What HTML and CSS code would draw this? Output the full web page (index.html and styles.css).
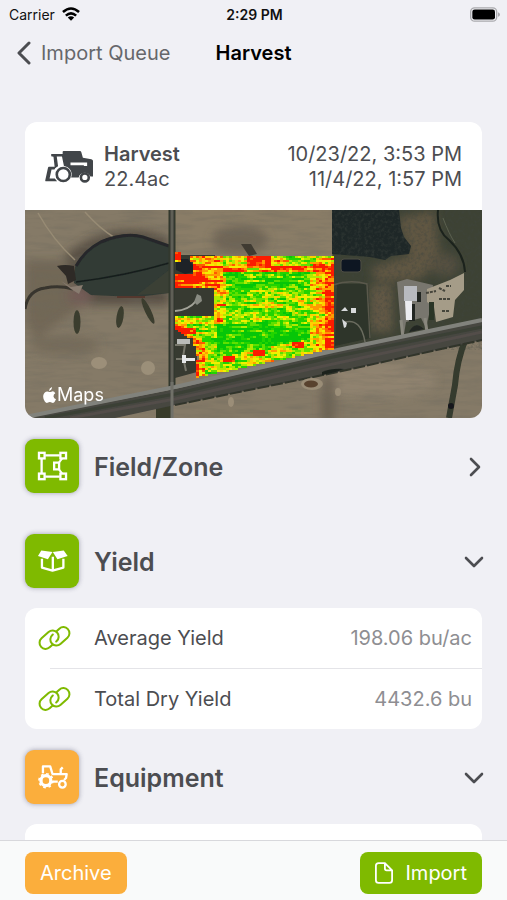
FILE: index.html
```html
<!DOCTYPE html>
<html lang="en">
	<head>
		<meta charset="UTF-8">
		<meta name="viewport" content="width=device-width, initial-scale=1">
		<title>Harvest</title>
		<link rel="stylesheet" href="styles.css">
	</head>
	<body>
		<div class="app">
			<div class="status">
				<div class="carrier">
					<span>Carrier</span>
					<svg class="wifi" viewBox="0 0 56 42"><g fill="none" stroke="#000" stroke-width="8"><path d="M3 15 Q28 -7 53 15"/><path d="M12 26 Q28 12 44 26"/></g><path d="M18 32 Q28 24 38 32 L28 42 Z"/></svg>
				</div>
				<div class="time">2:29 PM</div>
				<svg class="battery" viewBox="0 0 90 44"><rect x="2" y="2" width="78" height="40" rx="12" fill="#f0f0f5" stroke="#a9a9ad" stroke-width="4"/><rect x="7" y="7" width="68" height="30" rx="7"/><path d="M84 15 q6 2 6 7 t-6 7z" fill="#a9a9ad"/></svg>
			</div>

			<nav class="nav">
				<a class="back" href="#">
					<svg viewBox="0 0 14 24"><path d="M12 2 L2 12 L12 22"/></svg>
					<span>Import Queue</span>
				</a>
				<h1>Harvest</h1>
			</nav>

			<main class="content">
				<section class="card">
					<div class="summary">
						<svg class="combine" viewBox="74 102 150 100">
							<g fill="#414549">
								<path d="M93 112 H128 V106 Q128 103 131 103 H181 Q184 103 185 106 L190 124 L216 128 Q221 129 221 134 V181 H213 A19 19 0 0 0 177 184 H154 A26 26 0 0 0 132 149 L126 120 H110 L114 150 L104 156 L100 121 L93 119 Z"/>
								<path fill-rule="evenodd" d="M86 151 H108 L103 160 H94 L88 187 H104 L111 196 H76 Q74 196 75 192 L83 155 Q84 151 86 151 Z"/>
							</g>
							<path d="M152 138 H203 V149 H193 V147 H152 Z" fill="#fff"/>
							<circle cx="130" cy="175" r="20" fill="#fff" stroke="#414549" stroke-width="8"/>
							<circle cx="196" cy="184" r="12" fill="#fff" stroke="#414549" stroke-width="8"/>
						</svg>
						<div class="what"><strong>Harvest</strong><br>22.4ac</div>
						<div class="when">10/23/22, 3:53 PM<br>11/4/22, 1:57 PM</div>
					</div>
					<div class="map">
						<svg class="aerial" viewBox="0 0 457 208" preserveAspectRatio="xMidYMid slice">
							<defs>
								<filter id="soil" x="0" y="0" width="100%" height="100%">
									<feTurbulence type="fractalNoise" baseFrequency="0.03 0.2" numOctaves="4" seed="4"/>
									<feColorMatrix values="0 0 0 0 0.15  0 0 0 0 0.14  0 0 0 0 0.11  0.8 0 0 0 -0.34"/>
								</filter>
								<filter id="leaf" x="0" y="0" width="100%" height="100%">
									<feTurbulence type="fractalNoise" baseFrequency="0.3" numOctaves="3" seed="9"/>
									<feColorMatrix values="0 0 0 0 0.05  0 0 0 0 0.06  0 0 0 0 0.05  1.4 0 0 0 -0.6"/>
								</filter>
								<filter id="soft"><feGaussianBlur stdDeviation="5"/></filter>
								<filter id="edge"><feGaussianBlur stdDeviation="0.7"/></filter>
							</defs>

							<!-- soil -->
							<rect width="457" height="208" fill="#857a67"/>
							<rect x="150" width="158" height="46" fill="#8a7d67"/>
							<g filter="url(#soft)">
								<path d="M0 50 L45 50 L60 95 L10 130 L0 110 Z" fill="#655c4d" opacity=".6"/>
								<path d="M40 45 Q90 5 144 28 V95 H60 Z" fill="#4d463c" opacity=".8"/>
								<ellipse cx="55" cy="86" rx="12" ry="9" fill="#735c57"/>
								<ellipse cx="40" cy="135" rx="35" ry="10" fill="#6c6252" opacity=".6"/>
								<ellipse cx="215" cy="30" rx="28" ry="14" fill="#655d50" opacity=".7"/>
								<ellipse cx="350" cy="170" rx="60" ry="18" fill="#928672" opacity=".8"/>
								<rect x="296" y="165" width="14" height="50" fill="#625a4c" opacity=".7"/>
							</g>
							<rect width="457" height="208" filter="url(#soil)"/>

							<!-- slough and ditches -->
							<g filter="url(#edge)">
								<path d="M13 3 Q28 30 50 50 M60 2 Q74 18 90 28" stroke="#978b74" stroke-width="1.5" fill="none"/>
								<path d="M49 73 L50 57 Q58 40 75 31 Q100 20 118 26 L144 36 V83 L112 87 L66 85 Z" fill="#303a34"/>
								<path d="M112 85 L144 60 V83 Z" fill="#3b4036"/>
								<path d="M51 56 Q60 40 76 32 Q100 22 118 27 L144 36" fill="none" stroke="#25282a" stroke-width="3"/>
								<path d="M51 72 Q100 66 144 53" fill="none" stroke="#171f1d" stroke-width="1.5"/>
								<path d="M32 56 Q40 54 49 56 L51 70 L43 74 L41 66 Z" fill="#2d2a26"/>
								<path d="M0 99 Q3 80 20 78 Q34 75 48 79" fill="none" stroke="#38342d" stroke-width="3"/>
								<path d="M36 71 l10 6 l12 -2 l-4 9 l-8 -5z" fill="#887b70"/>
								<path d="M92 87 H120" stroke="#54382f" stroke-width="2"/>
								<g fill="#3a3c2e">
									<ellipse cx="52" cy="112" rx="3.5" ry="12"/>
									<ellipse cx="95" cy="107" rx="3.5" ry="11" transform="rotate(9 95 107)"/>
									<ellipse cx="123" cy="101" rx="3" ry="14" transform="rotate(-25 123 101)"/>
								</g>
								<ellipse cx="74" cy="153" rx="8" ry="6" fill="#9c8f79"/>
								<ellipse cx="123" cy="158" rx="7" ry="7" fill="#9b8f79"/>
								<path d="M216 34 l10 0 l6 10 l-8 2z" fill="#3f3b33"/>
							</g>

							<!-- woods and pasture -->
							<path d="M307 0 H457 V112 L308 142 Z" fill="#3d4234"/>
							<g filter="url(#soft)">
								<path d="M372 8 L410 0 L415 50 L395 70 L352 72 L345 58 L385 45 Z" fill="#605643"/>
								<path d="M345 75 H368 V122 H345 Z" fill="#625844"/>
								<ellipse cx="420" cy="55" rx="14" ry="12" fill="#545040"/>
							</g>
							<path d="M307 0 H374 L376 18 L379 27 L386 36 L384 44 L366 46 L360 50 L345 47 L307 44 Z" fill="#1e2727"/>
							<rect x="307" y="0" width="150" height="140" filter="url(#leaf)" opacity=".8"/>
							<path d="M413 0 Q411 20 424 30 Q439 44 440 62" fill="none" stroke="#1b221c" stroke-width="2"/>
							<path d="M418 8 Q424 24 430 33" fill="none" stroke="#5c6150" stroke-width="1"/>

							<!-- farmyard -->
							<g filter="url(#edge)">
								<rect x="316" y="49" width="20" height="13" rx="3" fill="#111522" stroke="#4d4c43"/>
								<path d="M312 74 H343 L346 128 L310 136 Z" fill="#2d3529"/>
								<path d="M308 75 Q325 69 342 74 L345 128" fill="none" stroke="#5a594c" stroke-width="1.5"/>
								<path d="M320 112 Q336 108 340 132" fill="none" stroke="#6b6c5f" stroke-width="1.5"/>
								<path d="M326 98 h5 v5 h-5z M317 109 l5 4 l-1 4 l-2 1 z M316 101 l4 -4 l3 4z" fill="#d8dadb"/>
								<path d="M372 72 L382 69 L408 75 L405 100 L401 118 L396 108 L381 112 L379 124 L376 118 Z" fill="#78766e"/>
								<path d="M376 110 L378 128 M400 108 L402 122" stroke="#8a887e" stroke-width="3"/>
								<path d="M402 79 L425 70 L439 63 L439 80 L430 90 L428 107 L411 112 L409 97 L402 92 Z" fill="#a59c88"/>
								<rect x="404" y="92" width="5" height="18" fill="#2c3428"/>
								<path d="M392 82 h4 v10 h-4z M387 94 h3 v17 h-6 v-3 h3z M384 122 q6 -12 15 -3z" fill="#202622"/>
								<path d="M379 76 H392 V91 H379 Z" fill="#b8babf"/>
								<path d="M380 91 H387 V110 H381 Z" fill="#ececf0"/>
								<path d="M401 83 l10 -2 M414 78 l6 3 M421 76 h5 M414 89 h12 M417 101 h7" stroke="#45443b" stroke-width="2" stroke-dasharray="3 1"/>
							</g>

							<!-- roads -->
							<g filter="url(#edge)">
								<path d="M147 0 V184" stroke="#33372f" stroke-width="7"/>
								<path d="M147 0 V184" stroke="#5f5f57" stroke-width="3"/>
								<path d="M139 190 V208" stroke="#373b2c" stroke-width="16"/>
								<path d="M441 128 Q432 150 430 175 L424 208" fill="none" stroke="#343a2d" stroke-width="6"/>
								<path d="M0 208 L150 179 L308 142 L457 111 V130 L308 163 L150 195 L90 208 Z" fill="#464641"/>
								<path d="M0 207 L150 177 L308 141 L457 110" fill="none" stroke="#81827c" stroke-width="4"/>
								<path d="M20 208 L150 184 L308 147 L457 117" fill="none" stroke="#3a4035" stroke-width="3"/>
								<path d="M45 208 L150 189 L308 154 L457 122" fill="none" stroke="#524d49" stroke-width="3"/>
								<path d="M150 195 L308 163 L457 130" fill="none" stroke="#30342b" stroke-width="2" stroke-dasharray="12 2"/>
								<path d="M147 172 V208" stroke="#6f6f68" stroke-width="3"/>
								<path d="M297 162 q10 -4 22 -3 l-8 3 l-14 3z" fill="#1e231e"/>
								<ellipse cx="287" cy="174" rx="11" ry="6" fill="#9a8d77"/>
								<ellipse cx="286" cy="174" rx="7" ry="3.5" fill="#58422f"/>
								<ellipse cx="313" cy="182" rx="3" ry="4" fill="#9d907a"/>
								<ellipse cx="206" cy="192" rx="3" ry="5" fill="#9b8e78"/>
								<circle cx="426" cy="196" r="3" fill="#15191a"/>
							</g>

							<!-- homestead inside the field -->
							<path d="M150 45 H190 V106 H172 V162 L150 168 Z" fill="#373a31"/>
							<path d="M151 49 h12 l5 6 v7 l-8 2 l-9 -4z" fill="#1e2227"/>
							<path d="M150 101 Q164 100 171 91 L174 86" fill="none" stroke="#a3a399" stroke-width="2"/>
							<path d="M172 84 l4 2 l1 5 l-5 4 l-3 -3z" fill="#898b82"/>
							<rect x="152" y="129" width="13" height="5" fill="#b9bbb9"/>
							<path d="M150 135 h10 l-2 12 l3 14 M151 149 h10" fill="none" stroke="#77776c" stroke-width="2"/>
							<path d="M157 145 h4 v3 h9 v3 h-9 v2 h-4z" fill="#e4e6e8"/>

							<g id="yield"></g>
						</svg>
						<div class="credit">
							<svg viewBox="0 0 36 44"><path d="M25 0 Q25 8 17 11 Q16 4 25 0 Z M18 14 Q21 14 25 12 Q31 11 34 17 Q29 20 29 26 Q30 32 36 34 Q33 42 28 44 Q25 44 22 42 Q18 40 14 43 Q9 46 5 40 Q-1 32 1 22 Q4 12 12 12 Q15 13 18 14 Z"/></svg>
							<span>Maps</span>
						</div>
					</div>
				</section>

				<button class="head" type="button">
					<span class="tile green">
						<svg viewBox="64 64 94 90"><g fill="none" stroke="#fff" stroke-width="7"><path d="M89 77 H133 M78 87 V131 M89 141 H133"/><path d="M140 87 L131 98 M131 120 L140 131" stroke-width="6"/><rect x="70" y="69" width="17" height="17"/><rect x="135" y="69" width="17" height="17"/><rect x="70" y="132" width="17" height="17"/><rect x="135" y="132" width="17" height="17"/><path d="M131 99 H116 V119 H131 Z"/></g></svg>
					</span>
					<span class="label">Field/Zone</span>
					<svg class="chevron" viewBox="0 0 20 20"><path d="M7 2 L15 10 L7 18"/></svg>
				</button>

				<button class="head" type="button">
					<span class="tile green">
						<svg viewBox="64 348 94 90"><g fill="#fff"><path d="M77 361 L111 366 L97 388 L67 378 Z M145 361 L112 366 L126 388 L157 378 Z"/></g><path d="M79 386 V413 L111 422 L144 413 V386 M112 380 V420" fill="none" stroke="#fff" stroke-width="7" stroke-linejoin="round"/></svg>
					</span>
					<span class="label">Yield</span>
					<svg class="chevron" viewBox="0 0 20 20"><path d="M2 6 L10 14 L18 6"/></svg>
				</button>
				<dl class="rows">
					<div class="row">
						<svg class="link" viewBox="0 0 98 76"><path d="M-4 18 H-14 A18 18 0 0 1 -14 -18 H14 A18 18 0 0 1 14 18 H12" transform="translate(33 43) rotate(-42)"/><path d="M-4 18 H-14 A18 18 0 0 1 -14 -18 H14 A18 18 0 0 1 14 18 H12" transform="translate(65 33) rotate(138)"/></svg>
						<dt>Average Yield</dt>
						<dd>198.06 bu/ac</dd>
					</div>
					<div class="row">
						<svg class="link" viewBox="0 0 98 76"><path d="M-4 18 H-14 A18 18 0 0 1 -14 -18 H14 A18 18 0 0 1 14 18 H12" transform="translate(33 43) rotate(-42)"/><path d="M-4 18 H-14 A18 18 0 0 1 -14 -18 H14 A18 18 0 0 1 14 18 H12" transform="translate(65 33) rotate(138)"/></svg>
						<dt>Total Dry Yield</dt>
						<dd>4432.6 bu</dd>
					</div>
				</dl>

				<button class="head" type="button">
					<span class="tile orange">
						<svg viewBox="64 67 94 90"><g fill="none" stroke="#fff" stroke-width="7" stroke-linejoin="round"><path d="M82 101 V80 H104 L111 103 H154 L152 115 L146 121 M111 103 H121 M136 103 V89 L142 83 M112 126 H127"/><circle cx="91" cy="123" r="15" stroke-width="10"/><circle cx="91" cy="123" r="21" stroke-width="5" stroke-dasharray="8 8.5"/><circle cx="141" cy="134" r="10"/></g></svg>
					</span>
					<span class="label">Equipment</span>
					<svg class="chevron" viewBox="0 0 20 20"><path d="M2 6 L10 14 L18 6"/></svg>
				</button>
				<div class="rows empty"></div>
			</main>

			<footer class="bar">
				<button class="btn orange" type="button">Archive</button>
				<button class="btn green" type="button">
					<svg viewBox="0 0 20 24"><path d="M4 1 H11 L19 9 V20 Q19 23 16 23 H4 Q1 23 1 20 V4 Q1 1 4 1 Z M11 1 V7 Q11 9 13 9 H19"/></svg>
					<span>Import</span>
				</button>
			</footer>
		</div>
		<script src="yield.js"></script>
	</body>
</html>
```

FILE: styles.css
```css
*{
	margin: 0;
	padding: 0;
	box-sizing: border-box;
}
body{
	font-family: Inter, "Liberation Sans", sans-serif;
	font-size: 20px;
	color: #4c4d51;
	background: #f0f0f5;
}
button{
	font: inherit;
	color: inherit;
	border: 0;
	background: none;
	cursor: pointer;
}
svg{
	display: block;
	flex: none;
}
.app{
	height: 100vh;
	display: flex;
	flex-direction: column;
}

/* status bar */
.status{
	display: grid;
	grid-template-columns: 1fr auto 1fr;
	align-items: center;
	height: 28px;
	padding: 0 7px 0 9px;
	font-size: 14px;
	color: #111;
}
.carrier{
	display: flex;
	align-items: center;
	gap: 7px;
}
.wifi{
	width: 18px;
	height: 14px;
}
.time{
	font-weight: 600;
}
.battery{
	width: 30px;
	height: 15px;
	justify-self: end;
}

/* navigation */
.nav{
	display: grid;
	grid-template-columns: 1fr auto 1fr;
	align-items: center;
	height: 50px;
	padding: 0 17px;
}
.nav h1{
	font-size: 20px;
	font-weight: 600;
	color: #000;
}
.back{
	display: flex;
	align-items: center;
	gap: 10px;
	color: #66676b;
	text-decoration: none;
	white-space: nowrap;
}
.back svg{
	width: 14px;
	height: 24px;
}
.back path,
.chevron path{
	fill: none;
	stroke: #4c4d51;
	stroke-width: 3;
	stroke-linecap: round;
	stroke-linejoin: round;
}
.chevron path{
	stroke-width: 2.6;
}

/* scrolling part */
.content{
	flex: 1;
	min-height: 0;
	padding: 44px 25px 0;
	overflow-x: hidden;
	overflow-y: auto;
	scrollbar-width: none;
}
.card{
	background: #fff;
	border-radius: 12px;
	overflow: hidden;
}
.summary{
	display: flex;
	align-items: center;
	gap: 10px;
	height: 88px;
	padding: 2px 20px 0;
	line-height: 25px;
}
.summary strong{
	font-weight: 600;
}
.combine{
	width: 49px;
	height: 34px;
}
.when{
	margin-left: auto;
	text-align: right;
}
.map{
	position: relative;
}
.aerial{
	width: 100%;
	height: 208px;
}
.credit{
	position: absolute;
	left: 18px;
	bottom: 12px;
	display: flex;
	align-items: center;
	gap: 1px;
	font-size: 18px;
	line-height: 22px;
	color: #fff;
}
.credit svg{
	width: 13px;
	height: 16px;
	fill: #fff;
}

/* section heads */
.head{
	display: flex;
	align-items: center;
	gap: 15px;
	width: 100%;
	padding: 21px 0 20px;
	text-align: left;
}
.tile{
	display: flex;
	align-items: center;
	justify-content: center;
	width: 54px;
	height: 54px;
	border-radius: 9px;
	box-shadow: 0 0 5px rgba(60,60,90,0.45);
}
.tile svg{
	width: 31px;
	height: 30px;
}
.green{
	background: #7fba00;
}
.orange{
	background: #fbae3c;
}
.label{
	flex: 1;
	padding-top: 2px;
	font-size: 25px;
	font-weight: 600;
}
.chevron{
	width: 20px;
	height: 20px;
	margin: 2px -2px 0 0;
}
.rows{
	background: #fff;
	border-radius: 12px;
}
.row{
	position: relative;
	display: flex;
	align-items: center;
	height: 60px;
	padding: 0 10px 0 13px;
}
.row + .row{
	height: 61px;
}
.row + .row::before{
	content: "";
	position: absolute;
	top: 0;
	left: 25px;
	right: 0;
	border-top: 1px solid #e4e4e8;
}
.row dt{
	margin-left: 23px;
}
.row dd{
	margin-left: auto;
	color: #8e8e92;
}
.link{
	width: 33px;
	height: 26px;
}
.link path{
	fill: none;
	stroke: #7fba00;
	stroke-width: 6;
	stroke-linecap: round;
}
.empty{
	height: 61px;
}

/* bottom bar */
.bar{
	display: flex;
	justify-content: space-between;
	height: 60px;
	padding: 11px 25px 7px;
	background: #f9fafa;
	border-top: 1px solid #d8d8dc;
}
.btn{
	display: flex;
	align-items: center;
	gap: 12px;
	height: 42px;
	padding: 0 15px;
	border-radius: 8px;
	color: #fff;
}
.btn svg{
	width: 18px;
	height: 22px;
	fill: none;
	stroke: #fff;
	stroke-width: 2;
}
```

FILE: yield.js
```js
// yield cells of the field, one small rect per pass of the combine
var g = document.getElementById("yield");
var cw = 3, ch = 2;
var seed = 7;

function rnd(){
	seed = (seed * 16807) % 2147483647;
	return seed / 2147483647;
}

function inside(x, y, a, b, c, d){
	return x >= a && x < c && y >= b && y < d;
}

// bottom edge follows the highway
function bottom(x){
	return 169 - (x - 168) * 0.21;
}

// left edge below the homestead
function left(y){
	if(y < 118) return 150;
	if(y < 128) return 150 + (y - 118) * 1.2;
	return y < 150 ? 166 + (y - 128) * 0.3 : 169;
}

var red = [
	[150,64,166,78],[168,54,174,60],[166,66,182,72],[222,44,244,57],
	[196,57,222,61],[244,56,276,60],[288,54,300,61],[197,146,209,151],
	[227,140,239,145],[265,132,277,137],[190,108,198,112],[150,118,170,124],
	[170,150,174,168],[298,130,306,138],[150,42,155,50]
];

function level(x, y){
	var v = 0.82;
	if(y > 76 && y < 112) v = 0.7 - (x - 190) * 0.0008;
	if(y > 112 && y < 138 && x > 172 && x < 288) v = 0.97;
	if(inside(x, y, 258, 63, 286, 78)) v = 0.9;
	if(x > 284) v = 0.52;
	if(x > 290) v = 0.4;
	if(x > 298) v = 0.14;
	if(y < 62) v = Math.min(v, 0.42);
	if(y < 53) v = 0.52;
	if(x < 196 && y < 80) v = Math.min(v, 0.28);
	if(x < 196 && y >= 80 && y < 114) v = 0.44;
	if(x < 200 && x > 195 && y > 66 && y < 112) v = 0.4;
	if(y > 104 && y < 110 && x < 180) v = 0.6;
	if(x < left(y) + 10 && y > 112) v = 0.27;
	if(x >= left(y) + 10 && x < 190 && y > 112) v = Math.min(v, 0.68);
	if(bottom(x) - y < 17) v = Math.min(v, 0.64);
	for(var i = 0; i < red.length; i++){
		var r = red[i];
		if(inside(x, y, r[0], r[1], r[2], r[3])) v = 0;
	}
	return v;
}

function color(v){
	if(v < 0.14) return "#fb1b00";
	if(v < 0.24) return "#ff5a00";
	if(v < 0.36) return "#ff9c00";
	if(v < 0.46) return "#ffd000";
	if(v < 0.58) return "#f0f000";
	if(v < 0.68) return "#b0ea00";
	if(v < 0.8) return "#60e000";
	return v < 0.95 ? "#22d400" : "#06c608";
}

for(var y = 42; y < 170; y += ch){
	var streak = (rnd() - 0.5) * 0.1;
	var last = 0;
	for(var x = 150; x < 308; x += cw){
		last = last * 0.5 + (rnd() - 0.5) * 0.5;
		if(y < 45 && x > 155) continue;
		if(y + ch > bottom(x) || x < left(y)) continue;
		if(inside(x, y, 150, 78, 189, 105)) continue;
		if(inside(x, y, 150, 52, 168, 63) || inside(x, y, 156, 44, 164, 54)) continue;
		var rect = document.createElementNS("http://www.w3.org/2000/svg", "rect");
		rect.setAttribute("x", x);
		rect.setAttribute("y", y);
		rect.setAttribute("width", cw);
		rect.setAttribute("height", ch);
		rect.setAttribute("fill", color(level(x, y) + last + streak));
		g.appendChild(rect);
	}
}
```
